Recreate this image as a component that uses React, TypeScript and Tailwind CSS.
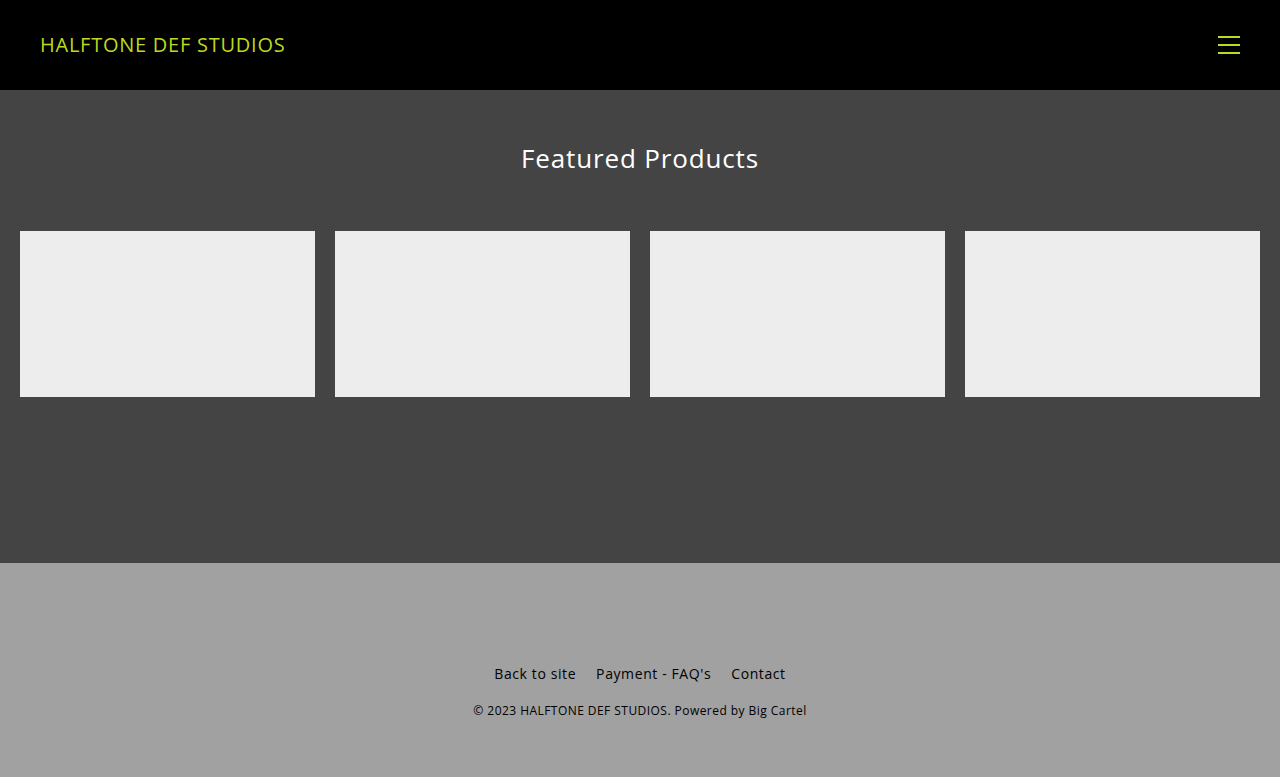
export default function App() {
  const font = { fontFamily: '"Open Sans", "Liberation Sans", sans-serif' };
  return (
    <div className="min-h-[777px] flex flex-col" style={font}>
      {/* Header */}
      <header className="h-[90px] bg-black flex items-center justify-between px-10">
        <a className="text-[20px] text-[#bcd91f] tracking-[0.75px] leading-none">HALFTONE DEF STUDIOS</a>
        <button aria-label="Menu" className="w-[22px] h-[18px] flex flex-col justify-between">
          <span className="block h-[2px] w-full bg-[#bcd91f]" />
          <span className="block h-[2px] w-full bg-[#bcd91f]" />
          <span className="block h-[2px] w-full bg-[#bcd91f]" />
        </button>
      </header>

      {/* Featured */}
      <main className="bg-[#444444] h-[473px] pt-[54px]">
        <h1 className="text-center text-white text-[26px] leading-[28px] tracking-[0.85px]">Featured Products</h1>
        <div className="grid grid-cols-4 gap-5 px-5 mt-[59px]">
          {[0, 1, 2, 3].map((i) => (
            <div key={i} className="h-[166px] bg-[#ededed]" />
          ))}
        </div>
      </main>

      {/* Footer */}
      <footer className="bg-[#a1a1a1] flex-1 flex flex-col items-center pt-[102px]">
        <nav className="flex gap-5 text-[14px] text-black leading-[18px] tracking-[0.6px]">
          <a>Back to site</a>
          <a>Payment - FAQ's</a>
          <a>Contact</a>
        </nav>
        <p className="mt-[20px] text-[12px] text-black leading-[16px] tracking-[0.45px]">
          © 2023 HALFTONE DEF STUDIOS. Powered by Big Cartel
        </p>
      </footer>
    </div>
  );
}
